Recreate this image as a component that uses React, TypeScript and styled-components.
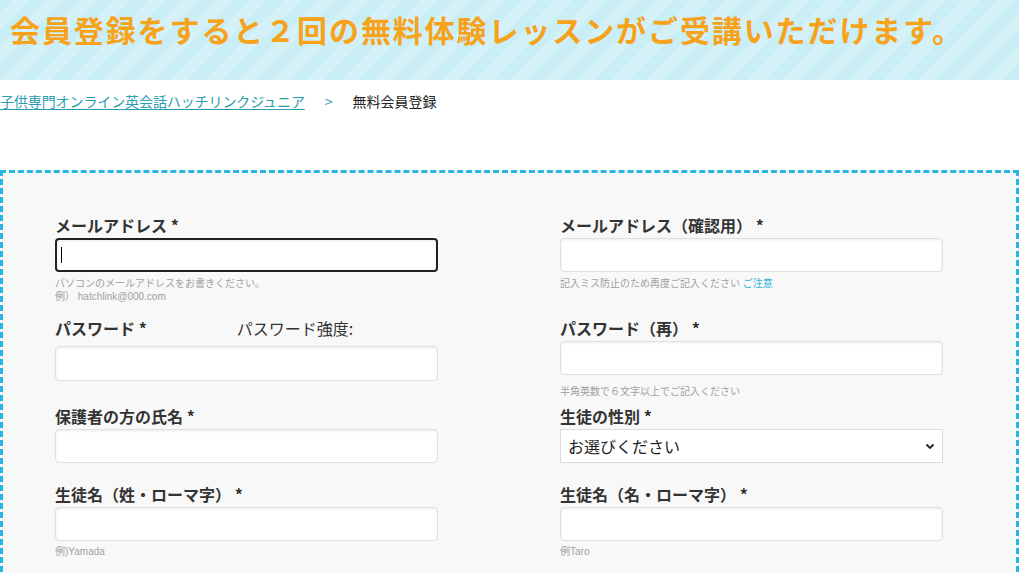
import React from "react";
import styled, { createGlobalStyle } from "styled-components";

const GlobalStyle = createGlobalStyle`
  body {
    margin: 0;
    background: #fff;
    font-family: "Noto Sans CJK JP", "Noto Sans", sans-serif;
    color: #333;
  }
`;

const Page = styled.div`
  width: 1019px;
`;

const Banner = styled.header`
  height: 80px;
  background: repeating-linear-gradient(
    -45deg,
    #c9eef6 0px,
    #c9eef6 12px,
    #d4f1f8 12px,
    #d4f1f8 24px
  );
  display: flex;
  align-items: flex-start;
  padding: 8px 0 0 10px;
  box-sizing: border-box;
`;

const BannerTitle = styled.h1`
  margin: 0;
  font-size: 30px;
  line-height: 42px;
  letter-spacing: 1.9px;
  font-weight: 700;
  color: #f7a21b;
  white-space: nowrap;
`;

const Breadcrumb = styled.nav`
  display: flex;
  align-items: center;
  height: 42px;
  font-size: 14px;
`;

const CrumbLink = styled.a`
  color: #2a9db0;
  text-decoration: underline;
  text-underline-offset: 2px;
  letter-spacing: -0.1px;
`;

const CrumbSep = styled.span`
  color: #2a9db0;
  margin: 0 20px;
`;

const CrumbCurrent = styled.span`
  color: #222;
`;

const FormBox = styled.form`
  margin-top: 48px;
  border: 3px dashed #27b7e2;
  background: #f8f8f8;
  padding: 42px 0 0 52px;
  height: 420px;
  box-sizing: border-box;
  display: flex;
  gap: 122px;
`;

const Column = styled.div`
  width: 383px;
  display: flex;
  flex-direction: column;
`;

const Field = styled.div<{ $top?: number }>`
  margin-top: ${(p) => p.$top ?? 0}px;
  display: flex;
  flex-direction: column;
`;

const LabelRow = styled.div<{ $gap?: number }>`
  display: flex;
  align-items: center;
  margin-bottom: ${(p) => p.$gap ?? 3}px;
`;

const Label = styled.label`
  font-size: 16px;
  line-height: 20px;
  font-weight: 700;
  color: #333;
  white-space: nowrap;
`;

const Strength = styled.span`
  font-size: 16px;
  line-height: 20px;
  color: #333;
  margin-left: 90px;
`;

const InputWrap = styled.div`
  position: relative;
`;

const TextInput = styled.input<{ $focused?: boolean; $h?: number }>`
  display: block;
  width: 100%;
  height: ${(p) => p.$h ?? 34}px;
  box-sizing: border-box;
  background: #fff;
  border: ${(p) => (p.$focused ? "2px solid #222" : "1px solid #e0e0e0")};
  border-radius: 4px;
  box-shadow: inset 0 1px 3px rgba(0, 0, 0, 0.08);
  outline: none;
  font-size: 16px;
  padding: 0 8px;
`;

const Caret = styled.span`
  position: absolute;
  left: 6px;
  top: 9px;
  width: 1px;
  height: 16px;
  background: #000;
`;

const SelectBox = styled.div`
  height: 34px;
  box-sizing: border-box;
  background: #fff;
  border: 1px solid #dcdcdc;
  display: flex;
  align-items: center;
  justify-content: space-between;
  padding: 0 7px;
  font-size: 16px;
  color: #222;
`;

const Help = styled.p<{ $top?: number }>`
  margin: ${(p) => p.$top ?? 5}px 0 0;
  font-size: 10px;
  line-height: 13px;
  color: #a0a0a0;
  font-family: "Liberation Sans", "Noto Sans CJK JP", sans-serif;
`;

const Note = styled.span`
  color: #2bb3d6;
`;

function Chevron() {
  return (
    <svg width="10" height="8" viewBox="0 0 10 8">
      <path d="M1.5 2.5 L5 6 L8.5 2.5" fill="none" stroke="#222" strokeWidth="1.8" />
    </svg>
  );
}

function App() {
  return (
    <Page>
      <GlobalStyle />
      <Banner>
        <BannerTitle>会員登録をすると２回の無料体験レッスンがご受講いただけます。</BannerTitle>
      </Banner>
      <Breadcrumb>
        <CrumbLink href="#">子供専門オンライン英会話ハッチリンクジュニア</CrumbLink>
        <CrumbSep>&gt;</CrumbSep>
        <CrumbCurrent>無料会員登録</CrumbCurrent>
      </Breadcrumb>
      <FormBox>
        <Column>
          <Field>
            <LabelRow>
              <Label>メールアドレス *</Label>
            </LabelRow>
            <InputWrap>
              <TextInput $focused type="email" />
              <Caret />
            </InputWrap>
            <Help>
              パソコンのメールアドレスをお書きください。
              <br />
              例） hatchlink@000.com
            </Help>
          </Field>
          <Field $top={15}>
            <LabelRow $gap={8}>
              <Label>パスワード *</Label>
              <Strength>パスワード強度:</Strength>
            </LabelRow>
            <TextInput type="password" $h={35} />
          </Field>
          <Field $top={25}>
            <LabelRow>
              <Label>保護者の方の氏名 *</Label>
            </LabelRow>
            <TextInput type="text" />
          </Field>
          <Field $top={21}>
            <LabelRow>
              <Label>生徒名（姓・ローマ字） *</Label>
            </LabelRow>
            <TextInput type="text" />
            <Help $top={4}>例)Yamada</Help>
          </Field>
        </Column>
        <Column>
          <Field>
            <LabelRow>
              <Label>メールアドレス（確認用） *</Label>
            </LabelRow>
            <TextInput type="email" />
            <Help>
              記入ミス防止のため再度ご記入ください <Note>ご注意</Note>
            </Help>
          </Field>
          <Field $top={28}>
            <LabelRow>
              <Label>パスワード（再） *</Label>
            </LabelRow>
            <TextInput type="password" />
            <Help $top={10}>半角英数で６文字以上でご記入ください</Help>
          </Field>
          <Field $top={8}>
            <LabelRow>
              <Label>生徒の性別 *</Label>
            </LabelRow>
            <SelectBox>
              <span>お選びください</span>
              <Chevron />
            </SelectBox>
          </Field>
          <Field $top={21}>
            <LabelRow>
              <Label>生徒名（名・ローマ字） *</Label>
            </LabelRow>
            <TextInput type="text" />
            <Help $top={4}>例Taro</Help>
          </Field>
        </Column>
      </FormBox>
    </Page>
  );
}

export default App;
